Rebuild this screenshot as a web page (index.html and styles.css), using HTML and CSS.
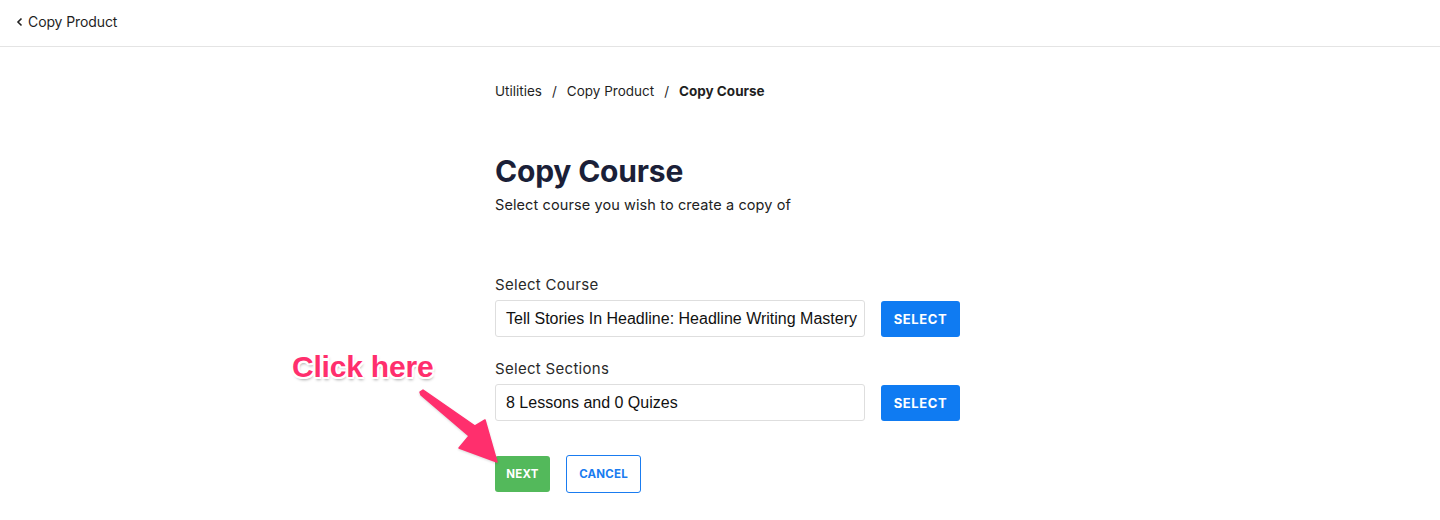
FILE: index.html
```html
<!DOCTYPE html>
<html>
<head>
<meta charset="utf-8">
<link rel="stylesheet" href="styles.css">
</head>
<body>
<header class="topbar">
  <span class="back-chevron"><svg width="8" height="10" viewBox="0 0 8 10"><path d="M5.5 1.5 L2 5 L5.5 8.5" fill="none" stroke="#222" stroke-width="1.6"/></svg></span>
  <span class="back-label">Copy Product</span>
</header>
<main class="main">
  <nav class="crumbs">
    <span>Utilities</span><span class="sep">/</span><span>Copy Product</span><span class="sep">/</span><strong>Copy Course</strong>
  </nav>
  <h1 class="title">Copy Course</h1>
  <p class="subtitle">Select course you wish to create a copy of</p>

  <div class="field">
    <label class="label">Select Course</label>
    <div class="row">
      <div class="input">Tell Stories In Headline: Headline Writing Mastery</div>
      <button class="btn-select">SELECT</button>
    </div>
  </div>
  <div class="field field-2">
    <label class="label">Select Sections</label>
    <div class="row">
      <div class="input">8 Lessons and 0 Quizes</div>
      <button class="btn-select">SELECT</button>
    </div>
  </div>
  <div class="actions">
    <button class="btn-next">NEXT</button>
    <button class="btn-cancel">CANCEL</button>
  </div>
</main>

<div class="callout">Click here</div>
<svg class="arrow" width="90" height="85" viewBox="0 0 90 85">
  <polygon points="8,5 11,7 60,41 70,35 82,77 44,63 54,51 6,10 5,7" fill="#ff2f6d" stroke="#ff2f6d" stroke-width="1.5" stroke-linejoin="round"/>
</svg>
</body>
</html>
```
FILE: styles.css
```css
* { box-sizing: border-box; }
html, body { margin: 0; padding: 0; background: #fff; }
body {
  font-family: Inter, "Noto Sans", sans-serif;
  color: #1f1f1f;
  position: relative;
  width: 1440px;
  height: 520px;
  overflow: hidden;
}
.topbar {
  height: 47px;
  border-bottom: 1px solid #e4e4e4;
  display: flex;
  align-items: center;
  padding-left: 16px;
  padding-bottom: 3px;
  font-size: 14px;
}
.back-chevron { display: flex; align-items: center; margin-right: 4px; }
.back-label { letter-spacing: -0.1px; }

.main {
  padding-left: 495px;
  padding-top: 34px;
}
.crumbs {
  font-size: 13.5px;
  line-height: 20px;
  color: #1f1f1f;
}
.crumbs .sep { margin: 0 10px; }
.crumbs strong { font-weight: 700; }

.title {
  margin: 52px 0 0;
  font-size: 30px;
  line-height: 36px;
  font-weight: 700;
  color: #1b1f38;
  letter-spacing: -0.2px;
}
.subtitle {
  margin: 6px 0 0;
  font-size: 14.5px;
  line-height: 20px;
  color: #222;
  letter-spacing: 0.1px;
}
.field { margin-top: 60px; }
.field-2 { margin-top: 22px; }
.label {
  display: block;
  font-size: 15px;
  line-height: 20px;
  color: #2a2a2a;
  margin-bottom: 5px;
  letter-spacing: 0.3px;
}
.row { display: flex; align-items: center; }
.input {
  width: 370px;
  height: 37px;
  border: 1.5px solid #dedede;
  border-radius: 3px;
  padding-left: 10px;
  display: flex;
  align-items: center;
  font-family: "Liberation Sans", Arial, sans-serif;
  font-size: 16px;
  color: #111;
  white-space: nowrap;
  overflow: hidden;
}
.btn-select {
  margin-left: 16px;
  width: 79px;
  height: 36px;
  border: none;
  border-radius: 3px;
  background: #0f7bf2;
  color: #fff;
  font-family: Inter, sans-serif;
  font-weight: 700;
  font-size: 13px;
  letter-spacing: 0.6px;
}
.actions {
  margin-top: 34px;
  display: flex;
  align-items: center;
}
.btn-next {
  width: 55px;
  height: 36px;
  border: none;
  border-radius: 3px;
  background: #53b95b;
  color: #fff;
  font-family: Inter, sans-serif;
  font-weight: 700;
  font-size: 11.5px;
  letter-spacing: 0.2px;
}
.btn-cancel {
  margin-left: 16px;
  width: 75px;
  height: 38px;
  border: 1px solid #1a7cf0;
  border-radius: 3px;
  background: #fff;
  color: #1a7cf0;
  font-family: Inter, sans-serif;
  font-weight: 700;
  font-size: 11.5px;
  letter-spacing: 0.2px;
}

.callout {
  position: absolute;
  left: 292px;
  top: 349px;
  font-family: "Liberation Sans", Arial, sans-serif;
  font-weight: 700;
  font-size: 30px;
  line-height: 36px;
  color: #ff2f6d;
  letter-spacing: -0.2px;
  text-shadow:
    -1.5px -1.5px 0 #fff, 1.5px -1.5px 0 #fff, -1.5px 1.5px 0 #fff, 1.5px 1.5px 0 #fff,
    0 2px 0 #fff, 0 -2px 0 #fff, 2px 0 0 #fff, -2px 0 0 #fff,
    1px 3px 3px rgba(0,0,0,0.35);
}
.arrow {
  position: absolute;
  left: 415px;
  top: 385px;
  filter: drop-shadow(0 1px 1px rgba(0,0,0,0.15));
}
```
